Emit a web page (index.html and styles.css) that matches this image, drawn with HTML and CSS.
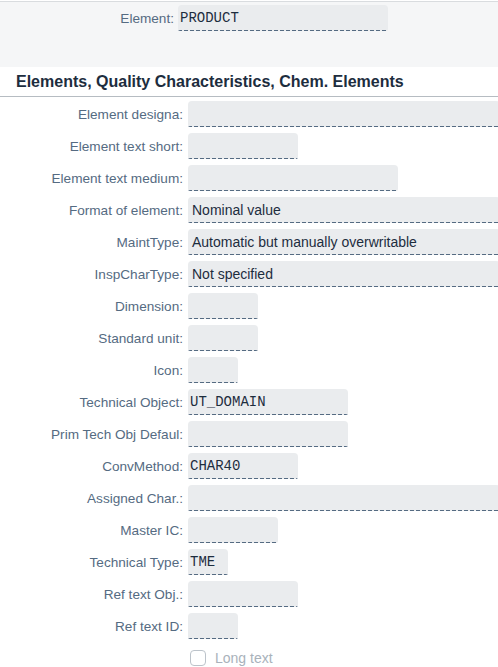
FILE: index.html
```html
<!DOCTYPE html>
<html>
<head>
<meta charset="utf-8">
<link rel="stylesheet" href="styles.css">
</head>
<body>
<div class="header">
  <div class="hrow">
    <span class="hlabel">Element:</span>
    <div class="field w210 mono">PRODUCT</div>
  </div>
</div>
<div class="title">Elements, Quality Characteristics, Chem. Elements</div>
<div class="form">
  <div class="row"><span class="label">Element designa:</span><div class="field full"></div></div>
  <div class="row"><span class="label">Element text short:</span><div class="field w110"></div></div>
  <div class="row"><span class="label">Element text medium:</span><div class="field w210"></div></div>
  <div class="row"><span class="label">Format of element:</span><div class="field full">Nominal value</div></div>
  <div class="row"><span class="label">MaintType:</span><div class="field full">Automatic but manually overwritable</div></div>
  <div class="row"><span class="label">InspCharType:</span><div class="field full">Not specified</div></div>
  <div class="row"><span class="label">Dimension:</span><div class="field w70"></div></div>
  <div class="row"><span class="label">Standard unit:</span><div class="field w70"></div></div>
  <div class="row"><span class="label">Icon:</span><div class="field w50"></div></div>
  <div class="row"><span class="label">Technical Object:</span><div class="field w160 mono">UT_DOMAIN</div></div>
  <div class="row"><span class="label">Prim Tech Obj Defaul:</span><div class="field w160"></div></div>
  <div class="row"><span class="label">ConvMethod:</span><div class="field w110 mono">CHAR40</div></div>
  <div class="row"><span class="label">Assigned Char.:</span><div class="field full"></div></div>
  <div class="row"><span class="label">Master IC:</span><div class="field w90"></div></div>
  <div class="row"><span class="label">Technical Type:</span><div class="field w40 mono">TME</div></div>
  <div class="row"><span class="label">Ref text Obj.:</span><div class="field w110"></div></div>
  <div class="row"><span class="label">Ref text ID:</span><div class="field w50"></div></div>
  <div class="row"><span class="label"></span><label class="check"><span class="box"></span><span class="ctext">Long text</span></label></div>
</div>
</body>
</html>
```
FILE: styles.css
```css
* { box-sizing: border-box; }
html, body { margin: 0; padding: 0; background: #fff; overflow: hidden; }
body {
  font-family: "Liberation Sans", Arial, sans-serif;
  font-size: 14px;
  color: #1d2d3e;
  width: 498px;
}
.header {
  margin-top: 1px;
  border-top: 1px solid #d9dcdf;
  background: #f5f6f7;
  height: 66px;
  padding-top: 3px;
}
.hrow {
  display: flex;
  align-items: center;
  gap: 4px;
}
.hlabel {
  width: 174px;
  text-align: right;
  color: #556b82;
  font-size: 13.6px;
}
.title {
  height: 30px;
  border-bottom: 1px solid #b6bcc2;
  padding-left: 16px;
  padding-top: 6px;
  font-size: 16px;
  font-weight: bold;
  color: #1d2d3e;
}
.form {
  padding-top: 4px;
  display: flex;
  flex-direction: column;
  gap: 6px;
}
.row {
  display: flex;
  align-items: center;
  gap: 5px;
  height: 26px;
}
.label {
  width: 183px;
  flex: none;
  text-align: right;
  color: #556b82;
  font-size: 13.6px;
  white-space: nowrap;
}
.field {
  flex: none;
  height: 26px;
  line-height: 26px;
  padding: 0 4px;
  border-radius: 4px 4px 2px 2px;
  background-color: #eaecee;
  background-image: linear-gradient(to right, #556b82 4px, transparent 4px);
  background-size: 6px 1px;
  background-repeat: repeat-x;
  background-position: left bottom;
  color: #1d2d3e;
  white-space: nowrap;
  overflow: hidden;
}
.mono {
  font-family: "Liberation Mono", "DejaVu Sans Mono", monospace;
  font-size: 14px;
  padding-left: 2px;
}
.w40 { width: 40px; }
.w50 { width: 50px; }
.w70 { width: 70px; }
.w90 { width: 90px; }
.w110 { width: 110px; }
.w160 { width: 160px; }
.w210 { width: 210px; }
.full { width: 312px; }
.check {
  display: flex;
  align-items: center;
  gap: 9px;
  padding-left: 2px;
}
.box {
  width: 16px;
  height: 16px;
  border: 1px solid #bcc3ca;
  border-radius: 4px;
  background: #fff;
}
.ctext {
  color: #a9b2bb;
}
```
